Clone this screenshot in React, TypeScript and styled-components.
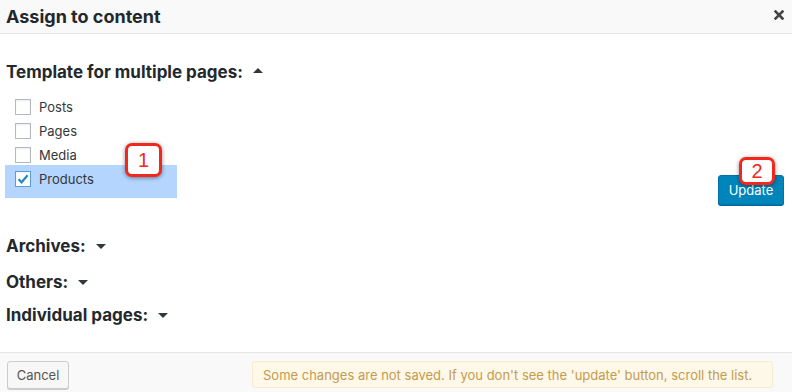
import React from "react";
import styled, { createGlobalStyle } from "styled-components";

const Global = createGlobalStyle`
  html, body { margin: 0; padding: 0; background: #fff; }
  body { font-family: Inter, "Liberation Sans", Arial, sans-serif; color: #23282d; }
  * { box-sizing: border-box; }
`;

const Modal = styled.div`
  width: 792px;
  height: 392px;
  display: flex;
  flex-direction: column;
  background: #fff;
  position: relative;
  overflow: hidden;
`;

const Header = styled.div`
  height: 34px;
  flex: none;
  display: flex;
  align-items: center;
  justify-content: space-between;
  padding: 0 7px 0 6px;
  background: #f9f9f9;
  border-bottom: 1px solid #e6e6e6;
`;

const Title = styled.h1`
  margin: 0;
  font-size: 18px;
  font-weight: 700;
  color: #23282d;
  line-height: 22px;
`;

const Close = styled.button`
  border: none;
  background: none;
  padding: 0;
  width: 12px;
  height: 12px;
  display: flex;
  align-items: center;
  justify-content: center;
  margin-top: -3px;
`;

const Body = styled.div`
  flex: 1;
  padding: 0 8px 0 6px;
  position: relative;
`;

const SectionHeading = styled.div<{ $top: number }>`
  display: flex;
  align-items: center;
  gap: 10px;
  margin-top: ${(p) => p.$top}px;
  height: 20px;
  font-size: 17px;
  font-weight: 700;
  color: #23282d;
`;

const Triangle = styled.span<{ $up?: boolean }>`
  width: 0;
  height: 0;
  border-left: 5px solid transparent;
  border-right: 5px solid transparent;
  ${(p) =>
    p.$up
      ? "border-bottom: 5px solid #32373c;"
      : "border-top: 5px solid #32373c;"}
  margin-top: ${(p) => (p.$up ? "-3px" : "1px")};
`;

const ListRow = styled.div`
  display: flex;
  justify-content: space-between;
  margin-top: 13px;
`;

const List = styled.div`
  display: flex;
  flex-direction: column;
`;

const CheckRow = styled.label<{ $selected?: boolean }>`
  display: flex;
  align-items: center;
  height: ${(p) => (p.$selected ? 33 : 24)}px;
  width: ${(p) => (p.$selected ? "172px" : "auto")};
  padding: ${(p) => (p.$selected ? "2px 0 7px 10px" : "0 0 0 9px")};
  margin-left: ${(p) => (p.$selected ? "-1px" : "0")};
  margin-top: ${(p) => (p.$selected ? "-2px" : "0")};
  background: ${(p) => (p.$selected ? "#b4d5fe" : "transparent")};
  font-size: 13px;
  color: #32373c;
`;

const Box = styled.span<{ $checked?: boolean }>`
  width: 16px;
  height: 16px;
  flex: none;
  border: 1px solid ${(p) => (p.$checked ? "#5b9dd9" : "#b4b9be")};
  background: #fff;
  box-shadow: inset 0 1px 2px rgba(0, 0, 0, 0.07);
  display: flex;
  align-items: center;
  justify-content: center;
  margin-right: 8px;
`;

const UpdateButton = styled.button`
  align-self: flex-end;
  margin-bottom: -7px;
  width: 66px;
  height: 30px;
  background: #0085ba;
  border: 1px solid #0073aa;
  border-radius: 3px;
  box-shadow: 0 1px 0 #006799;
  color: #fff;
  font-family: Inter, "Liberation Sans", Arial, sans-serif;
  font-size: 13px;
  padding: 0;
`;

const Footer = styled.div`
  height: 40px;
  flex: none;
  display: flex;
  justify-content: space-between;
  align-items: flex-start;
  padding: 8px 19px 0 7px;
  background: #f9f9f9;
  border-top: 1px solid #e6e6e6;
`;

const CancelButton = styled.button`
  width: 62px;
  height: 28px;
  background: #f7f7f7;
  border: 1px solid #cccccc;
  border-radius: 3px;
  box-shadow: 0 1px 0 #cccccc;
  color: #555;
  font-family: Inter, "Liberation Sans", Arial, sans-serif;
  font-size: 13px;
  padding: 0;
`;

const Notice = styled.div`
  height: 27px;
  width: 521px;
  display: flex;
  align-items: center;
  padding: 0 10px;
  background: #fdf8e8;
  border: 1px solid #f6ecd0;
  border-radius: 3px;
  color: #c59b4f;
  font-size: 13px;
  white-space: nowrap;
`;

const Badge = styled.div<{ $x: number; $y: number; $w: number; $h: number }>`
  position: absolute;
  left: ${(p) => p.$x}px;
  top: ${(p) => p.$y}px;
  width: ${(p) => p.$w}px;
  height: ${(p) => p.$h}px;
  background: #fff;
  border: 3px solid #f3281c;
  border-radius: 7px;
  box-shadow: 0 1px 4px rgba(0, 0, 0, 0.45);
  display: flex;
  align-items: center;
  justify-content: center;
  color: #ec2a1f;
  font-size: 20px;
  font-family: "Liberation Sans", Arial, sans-serif;
`;

const items = ["Posts", "Pages", "Media", "Products"];

export default function App() {
  return (
    <>
      <Global />
      <Modal>
        <Header>
          <Title>Assign to content</Title>
          <Close aria-label="Close">
            <svg width="10" height="10" viewBox="0 0 10 10">
              <path d="M1.5 1.5 L8.5 8.5 M8.5 1.5 L1.5 8.5" stroke="#444" strokeWidth="2.6" strokeLinecap="square" />
            </svg>
          </Close>
        </Header>
        <Body>
          <SectionHeading $top={28}>
            Template for multiple pages:
            <Triangle $up />
          </SectionHeading>
          <ListRow>
            <List>
              {items.map((it) => {
                const checked = it === "Products";
                return (
                  <CheckRow key={it} $selected={checked}>
                    <Box $checked={checked}>
                      {checked && (
                        <svg width="14" height="14" viewBox="0 0 14 14">
                          <path d="M2.5 7.2 L5.6 10.3 L11.6 3.2" stroke="#1e8cbe" strokeWidth="2.2" fill="none" />
                        </svg>
                      )}
                    </Box>
                    {it}
                  </CheckRow>
                );
              })}
            </List>
            <UpdateButton>Update</UpdateButton>
          </ListRow>
          <SectionHeading $top={38}>
            Archives:
            <Triangle />
          </SectionHeading>
          <SectionHeading $top={16}>
            Others:
            <Triangle />
          </SectionHeading>
          <SectionHeading $top={13}>
            Individual pages:
            <Triangle />
          </SectionHeading>
        </Body>
        <Footer>
          <CancelButton>Cancel</CancelButton>
          <Notice>Some changes are not saved. If you don't see the 'update' button, scroll the list.</Notice>
        </Footer>
        <Badge $x={125} $y={143} $w={37} $h={34}>1</Badge>
        <Badge $x={739} $y={157} $w={36} $h={28}>2</Badge>
      </Modal>
    </>
  );
}
